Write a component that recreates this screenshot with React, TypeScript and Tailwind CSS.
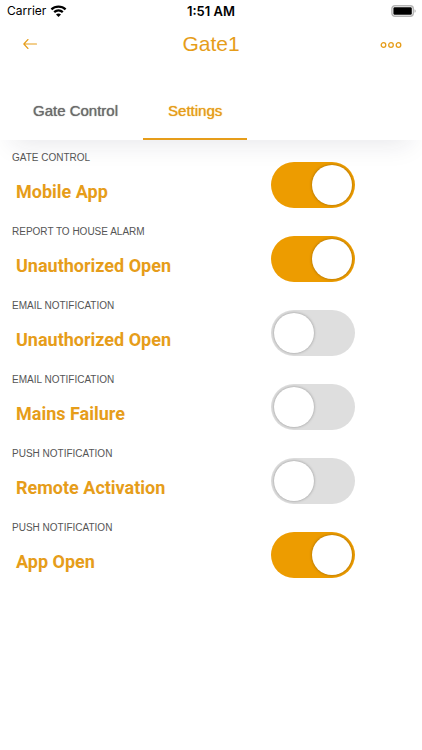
import { useState } from "react";
import clsx from "clsx";

const initialSettings = [
  { id: "mobile-app", group: "GATE CONTROL", name: "Mobile App", on: true },
  { id: "alarm-open", group: "REPORT TO HOUSE ALARM", name: "Unauthorized Open", on: true },
  { id: "email-open", group: "EMAIL NOTIFICATION", name: "Unauthorized Open", on: false },
  { id: "email-mains", group: "EMAIL NOTIFICATION", name: "Mains Failure", on: false },
  { id: "push-remote", group: "PUSH NOTIFICATION", name: "Remote Activation", on: false },
  { id: "push-app", group: "PUSH NOTIFICATION", name: "App Open", on: true },
];

function StatusBar() {
  return (
    <div className="grid h-[22px] grid-cols-3 items-center px-[6px] font-[Inter,sans-serif] text-[12px] leading-[22px] text-black">
      <div className="flex items-center gap-1 pl-px">
        <span>Carrier</span>
        <svg width="17" height="12" viewBox="0 0 17 12" fill="none" stroke="#000" strokeWidth="2.3" aria-hidden="true">
          <path d="M1.4 4.3C5.3.6 11.7.6 15.6 4.3" />
          <path d="M4.2 7.2c2.5-2.3 6.1-2.3 8.6 0" />
          <path d="M8.5 12 6 9.5c1.4-1.3 3.6-1.3 5 0z" fill="#000" stroke="none" />
        </svg>
      </div>
      <span className="text-center text-[13px] font-semibold">1:51 AM</span>
      <svg className="justify-self-end" width="25" height="12" viewBox="0 0 25 12" aria-hidden="true">
        <rect x=".9" y=".7" width="21.4" height="10.6" rx="3" fill="#fff" stroke="#b5b5b5" strokeWidth="1.4" />
        <rect x="2.4" y="2.2" width="18.4" height="7.6" rx="1.2" fill="#000" />
        <path d="M23.6 4.2c1.3.5 1.3 3.1 0 3.6z" fill="#999" />
      </svg>
    </div>
  );
}

function Switch({ id, on, onToggle }: { id: string; on: boolean; onToggle: () => void }) {
  return (
    <input
      id={id}
      type="checkbox"
      role="switch"
      checked={on}
      onChange={onToggle}
      className="flex h-[46px] w-[84px] shrink-0 cursor-pointer appearance-none items-center rounded-full bg-[#dedede] px-[3px] transition-colors before:size-10 before:rounded-full before:bg-white before:shadow-[0_0_3px_rgba(0,0,0,0.35)] before:content-[''] checked:justify-end checked:bg-[#ed9c00]"
    />
  );
}

export default function App() {
  const [tab, setTab] = useState("Settings");
  const [settings, setSettings] = useState(initialSettings);

  const toggle = (id: string) =>
    setSettings((list) => list.map((s) => (s.id === id ? { ...s, on: !s.on } : s)));

  return (
    <div className="min-h-screen bg-white font-['Liberation_Sans',Arial,sans-serif]">
      <header className="bg-white shadow-[0_16px_24px_-12px_rgba(30,30,60,0.1)]">
        <StatusBar />
        <div className="grid h-11 grid-cols-[1fr_auto_1fr] items-center px-5 text-[#e69d1a]">
          <button type="button" aria-label="Back" className="justify-self-start">
            <svg width="18" height="12" viewBox="0 0 18 12" fill="none" stroke="currentColor" strokeWidth="1.1" strokeLinecap="round" strokeLinejoin="round">
              <path d="M16.5 6H3.8M8 1.5 3.8 6 8 10.5" />
            </svg>
          </button>
          <h1 className="text-[21px] leading-6">Gate1</h1>
          <button type="button" aria-label="More" className="justify-self-end">
            <svg width="22" height="10" viewBox="0 0 22 10" fill="none" stroke="currentColor" strokeWidth="1.3">
              <circle cx="3.5" cy="6" r="2.3" />
              <circle cx="11" cy="6" r="2.3" />
              <circle cx="18.5" cy="6" r="2.3" />
            </svg>
          </button>
        </div>
        <nav className="flex pt-4 pl-2">
          {["Gate Control", "Settings"].map((name) => (
            <button
              key={name}
              type="button"
              onClick={() => setTab(name)}
              className={clsx(
                "h-[58px] border-b-2 px-[25px] pt-[2px] text-[15px] leading-5 [text-shadow:0_0_1px_currentColor]",
                tab === name ? "border-[#e69d1a] text-[#e69d1a]" : "border-transparent text-[#6b6b6b]",
              )}
            >
              {name}
            </button>
          ))}
        </nav>
      </header>
      <main className="pt-2">
        {settings.map((s) => (
          <div key={s.id} className="flex h-[74px] items-start justify-between pr-[67px] pl-3">
            <label htmlFor={s.id} className="pt-1">
              <span className="block text-[10px] leading-3 text-[#555]">{s.group}</span>
              <span className="block pt-4 pl-1 font-[Roboto,sans-serif] text-[18px] leading-6 font-bold text-[#e69d1a]">
                {s.name}
              </span>
            </label>
            <div className="pt-[14px]">
              <Switch id={s.id} on={s.on} onToggle={() => toggle(s.id)} />
            </div>
          </div>
        ))}
      </main>
    </div>
  );
}
